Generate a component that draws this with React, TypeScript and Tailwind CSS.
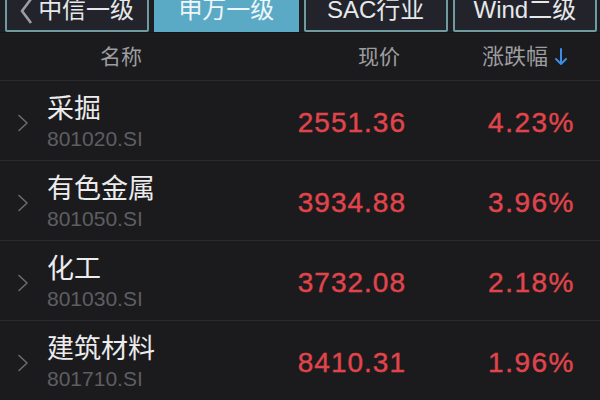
import React from "react";

const rows = [
  { name: "采掘", code: "801020.SI", price: "2551.36", pct: "4.23%" },
  { name: "有色金属", code: "801050.SI", price: "3934.88", pct: "3.96%" },
  { name: "化工", code: "801030.SI", price: "3732.08", pct: "2.18%" },
  { name: "建筑材料", code: "801710.SI", price: "8410.31", pct: "1.96%" },
];

const cjk = { fontFamily: '"Liberation Sans", "Noto Sans CJK SC", sans-serif' };

function Chevron() {
  return (
    <svg width="12" height="18" viewBox="0 0 12 18" className="shrink-0">
      <path d="M2 1.5 L10 9 L2 16.5" fill="none" stroke="#6b6b6e" strokeWidth="1.6" strokeLinecap="round" strokeLinejoin="round" />
    </svg>
  );
}

export default function App() {
  const tabs = ["中信一级", "申万一级", "SAC行业", "Wind二级"];
  return (
    <div className="w-[600px] h-[400px] overflow-hidden bg-[#1b1b1e] text-white" style={cjk}>
      <div className="h-[33px] bg-[#1d1e23] overflow-hidden border-b border-[#141417]">
        <div className="flex gap-[5px] pl-[5px] pr-[3px] -mt-[13px] h-[45px]">
          {tabs.map((t, i) => (
            <div
              key={t}
              className={
                i === 1
                  ? "flex-1 flex items-center justify-center bg-[#5aaac6] border-2 border-[#5aaac6] text-[24px] text-[#eef6f9]"
                  : "flex-1 flex items-center justify-center bg-[#22232b] border-2 border-[#6e9aa0] rounded-[2px] text-[24px] text-[#e6e8ea] relative"
              }
            >
              {i === 0 && (
                <span className="absolute left-[12px] top-1/2 -translate-y-1/2 mt-[1px]">
                  <svg width="14" height="28" viewBox="0 0 14 28">
                    <path d="M12 2 L3 14 L12 26" fill="none" stroke="#9a9ea4" strokeWidth="2.6" strokeLinejoin="round" />
                  </svg>
                </span>
              )}
              <span className={i === 0 ? "ml-[18px]" : ""}>{t}</span>
            </div>
          ))}
        </div>
      </div>
      <div className="h-[48px] flex items-center text-[21px] text-[#9d9da0] border-b border-[#2a2a2d]">
        <div className="w-[242px] text-center">名称</div>
        <div className="w-[158px] text-right">现价</div>
        <div className="flex-1 flex items-center justify-end pr-[31px]">
          <span className="text-[22px]">涨跌幅</span>
          <svg width="16" height="22" viewBox="0 0 16 22" className="ml-[5px]">
            <path d="M8 3 V18 M3 13 L8 18 L13 13" fill="none" stroke="#3d8ce6" strokeWidth="2" strokeLinecap="round" strokeLinejoin="round" />
          </svg>
        </div>
      </div>
      {rows.map((r) => (
        <div key={r.code} className="h-[80px] flex items-center border-b border-[#2a2a2d]">
          <div className="w-[47px] pl-[17px] flex items-center pt-[4px]">
            <Chevron />
          </div>
          <div className="w-[200px] flex flex-col pt-[5px]">
            <div className="text-[27px] leading-[31px] text-[#ececec]">{r.name}</div>
            <div className="text-[21px] leading-[26px] text-[#5e5e62] mt-[1px]">{r.code}</div>
          </div>
          <div className="w-[159px] text-right text-[28px] tracking-[1px] text-[#e0454b] [-webkit-text-stroke:0.4px_#e0454b] pt-[4px]">{r.price}</div>
          <div className="flex-1 text-right pr-[25px] text-[28px] tracking-[1.5px] text-[#e0454b] [-webkit-text-stroke:0.4px_#e0454b] pt-[4px]">{r.pct}</div>
        </div>
      ))}
    </div>
  );
}
